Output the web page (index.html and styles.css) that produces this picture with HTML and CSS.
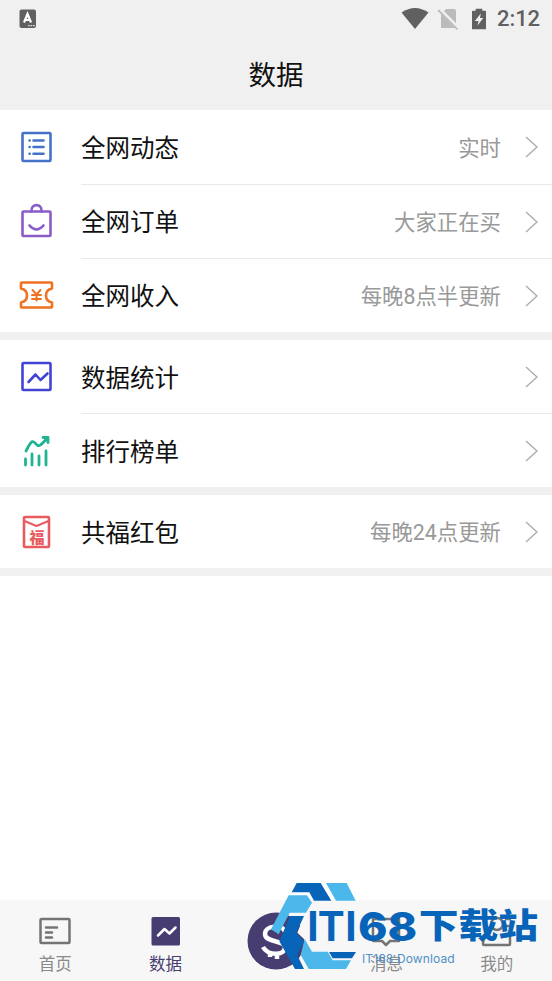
FILE: index.html
```html
<!DOCTYPE html>
<html lang="zh-CN">
<head>
<meta charset="utf-8">
<title>数据</title>
<link rel="stylesheet" href="styles.css">
</head>
<body>
<div class="screen">
  <header class="header">
    <div class="status">
      <svg class="status-app" width="18" height="20" viewBox="0 0 18 20"><rect x=".5" y=".5" width="16.5" height="18.5" rx="2" fill="#606060"/><path d="M5 13.5 8.5 5 12 13.5M6.5 11h4" fill="none" stroke="#fff" stroke-width="2.200"/><path d="M9 16.7h7" stroke="#ddd" stroke-width="1.3" stroke-dasharray="1.7 .8"/></svg>
      <div class="status-right">
        <svg width="28" height="22" viewBox="0 0 28 22"><path d="M.5 4.500Q14-4.500 27.500 4.500L14 21Z" fill="#606060"/></svg>
        <svg width="20" height="22" viewBox="0 0 20 22"><path d="M8 1h8q2 0 2 2v17H3V6Z" fill="#bbb"/><path d="M1 1 20 20" stroke="#f0f0f0" stroke-width="4"/><path d="M0 2 19.500 21.500" stroke="#bbb" stroke-width="1.8"/></svg>
        <svg width="14" height="23" viewBox="0 0 15 23"><path d="M4 0h7v2h3q1 0 1 1v19H0V3q0-1 1-1h3Z" fill="#606060"/><path d="M9.5 5 3 13h4l-1 5 6-8H8.500Z" fill="#f0f0f0"/></svg>
        <span class="time">2:12</span>
      </div>
    </div>
    <h1 class="title">数据</h1>
  </header>

  <main class="list">
    <section class="group first">
      <div class="row">
        <svg class="icon" viewBox="0 0 36 36" stroke="#4472c8"><rect x="4.500" y="4" width="28" height="28" rx="1"/><path d="M15.500 11.500h10M15.500 18h10M15.500 24.700h10"/><path d="M11.600 11.500h.1M11.600 18h.1M11.600 24.700h.1"/></svg>
        <div class="cell"><span class="label">全网动态</span><span class="note">实时</span><svg class="arrow" viewBox="0 0 13 22"><path d="M1 1 12 11 1 21"/></svg></div>
      </div>
      <div class="row">
        <svg class="icon" viewBox="0 0 36 36" stroke="#8a5cc8"><rect x="4.500" y="8.500" width="28" height="24.500" rx="1"/><path d="M13.500 8.500C12.500 0 24.500 0 23.500 8.500M11.500 22.500q7 8 14 0"/></svg>
        <div class="cell"><span class="label">全网订单</span><span class="note">大家正在买</span><svg class="arrow" viewBox="0 0 13 22"><path d="M1 1 12 11 1 21"/></svg></div>
      </div>
      <div class="row">
        <svg class="icon" viewBox="0 0 36 36" stroke="#ee7221"><path d="M4.500 5.500h28q1.500 0 1.500 1v5c-8 1.500-8 12.500 0 14v4q0 1-1.500 1h-28q-1.500 0-1.500-1v-4c8-1.500 8-12.500 0-14v-5q0-1 1.500-1Z"/><path d="m14.500 13 4 4.500 4-4.500M14 18h9M14 22h9M18.500 17.500v6" stroke-width="1.900"/></svg>
        <div class="cell"><span class="label">全网收入</span><span class="note">每晚8点半更新</span><svg class="arrow" viewBox="0 0 13 22"><path d="M1 1 12 11 1 21"/></svg></div>
      </div>
    </section>
    <section class="group">
      <div class="row">
        <svg class="icon" viewBox="0 0 36 36" stroke="#4144d4"><rect x="4.500" y="4" width="28" height="27" rx="1"/><path d="m10.500 23 7-7.500 5 5.500 7-6.500"/></svg>
        <div class="cell"><span class="label">数据统计</span><svg class="arrow" viewBox="0 0 13 22"><path d="M1 1 12 11 1 21"/></svg></div>
      </div>
      <div class="row">
        <svg class="icon" viewBox="0 0 36 36" stroke="#1fb394"><path d="M8 18c6-12 7-11 11-6 2 2 4 0 10.500-7M25 4.500h5v5M7.500 26v6M14 21v11M21 23v9M28 18v14" stroke-width="2.800"/><path d="M24 3.500h7v7Z" fill="#1fb394" stroke="none"/></svg>
        <div class="cell"><span class="label">排行榜单</span><svg class="arrow" viewBox="0 0 13 22"><path d="M1 1 12 11 1 21"/></svg></div>
      </div>
    </section>
    <section class="group">
      <div class="row">
        <svg class="icon" viewBox="0 0 36 36" stroke="#e85b5e"><rect x="6" y="3" width="25" height="30" rx="1"/><path d="m6.500 7 12 5L30.500 7" stroke-width="2"/><text class="fu" x="11.500" y="28.500">福</text></svg>
        <div class="cell"><span class="label">共福红包</span><span class="note">每晚24点更新</span><svg class="arrow" viewBox="0 0 13 22"><path d="M1 1 12 11 1 21"/></svg></div>
      </div>
    </section>
  </main>

  <nav class="tabs">
    <div class="tab"><svg class="tab-icon" viewBox="0 0 34 32"><rect x="2.500" y="4" width="29" height="24" rx="1"/><path d="M8 12.500h11M8 17.500h6M8 22.500h6"/></svg><span>首页</span></div>
    <div class="tab active"><svg class="tab-icon" viewBox="0 0 34 32"><rect x="2.500" y="2" width="28.500" height="28.500" rx="1.500" fill="#483d70" stroke="none"/><path d="m9 20.500 6.500-6.500 5 4.500 6-6" stroke="#fff"/></svg><span>数据</span></div>
    <div class="tab"><svg class="coin" viewBox="0 0 58 58"><circle cx="29" cy="29" r="28.500" fill="#483d70"/><path d="M38 20c-2-8-20-7-20 2 0 9 20 6 20 13 0 9-17 9-22 0M23 41v4M30 42v5" fill="none" stroke="#fff" stroke-width="4.500"/></svg></div>
    <div class="tab"><svg class="tab-icon" viewBox="0 0 34 32"><path d="M4 4h26v22h-9l-4 4-4-4H4Z"/><path d="M11 15v1M23 15v1"/></svg><span>消息</span></div>
    <div class="tab"><svg class="tab-icon" viewBox="0 0 34 32"><circle cx="17" cy="9" r="6"/><path d="M10 18Q3 21 3 29q0 1 1 1h25q1 0 1-1v-11"/><path d="M26 4h4M26 11h4"/></svg><span>我的</span></div>
  </nav>

  <svg class="watermark" viewBox="0 0 966 333">
    <path d="M246 98 282 98 330 98 240 230 300 245 245 245 222 207 202 188 222 138 178 138Z" fill="#f7f7f7"/>
    <g fill="#0864b8"><path d="M200 39h72l32 53h-52l-14-25h-53Z"/><path d="M180 138h42l-23 50 23 25-20 43 20 41h-27l-47-83Z"/><path d="M297 246h81l-12 19h-58Z"/></g>
    <g fill="#4cb7ea"><path d="M288 39h62l27 53h-59Z"/><path d="M176 76h55l15 22-18 30h-49l-33 65-23-15Z"/><path d="m224 207 22 38h47l15 26h55l-15 26H236l-24-43Z"/></g>
    <g class="brand"><text x="232 263 346" y="214">ITI</text><text class="brand-num" x="384" y="214" textLength="178" lengthAdjust="spacingAndGlyphs">68</text><text class="brand-cjk" x="566" y="205" textLength="358" lengthAdjust="spacingAndGlyphs">下载站</text></g>
    <text class="brand-sub" x="396" y="278" textLength="278">IT168 Download</text>
  </svg>
</div>
</body>
</html>
```
FILE: styles.css
```css
* { box-sizing: border-box; }
body { margin: 0; background: #fff; font-family: Roboto, "Noto Sans CJK SC", sans-serif; }
.screen { position: relative; display: flex; flex-direction: column; height: 981px; overflow: hidden; }
.header { height: 110px; background: #f0f0f0; }
.status { display: flex; justify-content: space-between; align-items: center; height: 38px; padding: 0 12px 0 19px; }
.status-right { display: flex; align-items: center; color: #606060; }
.status-right svg:nth-child(1) { margin-right: 9px; }
.status-right svg:nth-child(2) { margin-right: 14px; }
.time { margin-left: 11px; font-size: 22px; line-height: 38px; font-weight: 500; letter-spacing: -.1px; }
.title { margin: 0; padding-top: 3px; font-size: 27.500px; line-height: 70px; font-weight: 400; text-align: center; color: #111; }
.group { border-bottom: 8px solid #f0f0f0; }
.row { display: flex; align-items: center; height: 74px; padding-left: 18px; }
.first .row:first-child { height: 75px; }
.row:last-child { height: 73px; }
.icon { width: 36px; height: 36px; fill: none; stroke-width: 2.600; stroke-linecap: round; stroke-linejoin: round; }
.first .icon { margin-bottom: 2px; }
.fu { font: 900 15px "Noto Sans CJK SC", sans-serif; fill: #e85b5e; stroke: none; }
.cell { display: flex; flex: 1; align-items: center; align-self: stretch; margin-left: 27px; padding-right: 14px; border-bottom: 1px solid #e9e9e9; }
.row:last-child .cell { border-bottom: 0; }
.label { font-size: 24.500px; color: #111; }
.first .label { padding-bottom: 2px; }
.note { margin-left: auto; padding-bottom: 2px; font-size: 21.400px; color: #999; }
.arrow { width: 13px; height: 22px; margin-left: 24px; fill: none; stroke: #aaa; stroke-width: 1.300; }
.label + .arrow { margin-left: auto; }
.tabs { display: grid; grid-template-columns: repeat(5, 1fr); height: 81px; margin-top: auto; background: #f7f7f7; }
.tab { display: flex; flex-direction: column; align-items: center; padding-top: 15px; font-size: 16.500px; line-height: 24px; color: #8a8a8a; }
.tab span { margin-top: 6px; }
.active { color: #483d70; }
.tab-icon { width: 34px; height: 32px; fill: none; stroke: #747474; stroke-width: 2.500; stroke-linecap: round; stroke-linejoin: round; }
.coin { width: 58px; height: 58px; margin-top: -3px; }
.watermark { position: absolute; left: 230px; top: 870px; width: 322px; height: 111px; }
.brand { font: 700 121px Inter, sans-serif; fill: #0864b8; }
.brand-num { font-weight: 800; }
.brand-cjk { font: 900 104px "Noto Sans CJK SC", sans-serif; }
.brand-sub { font: 36px Inter, sans-serif; fill: #4f90c6; }
```
